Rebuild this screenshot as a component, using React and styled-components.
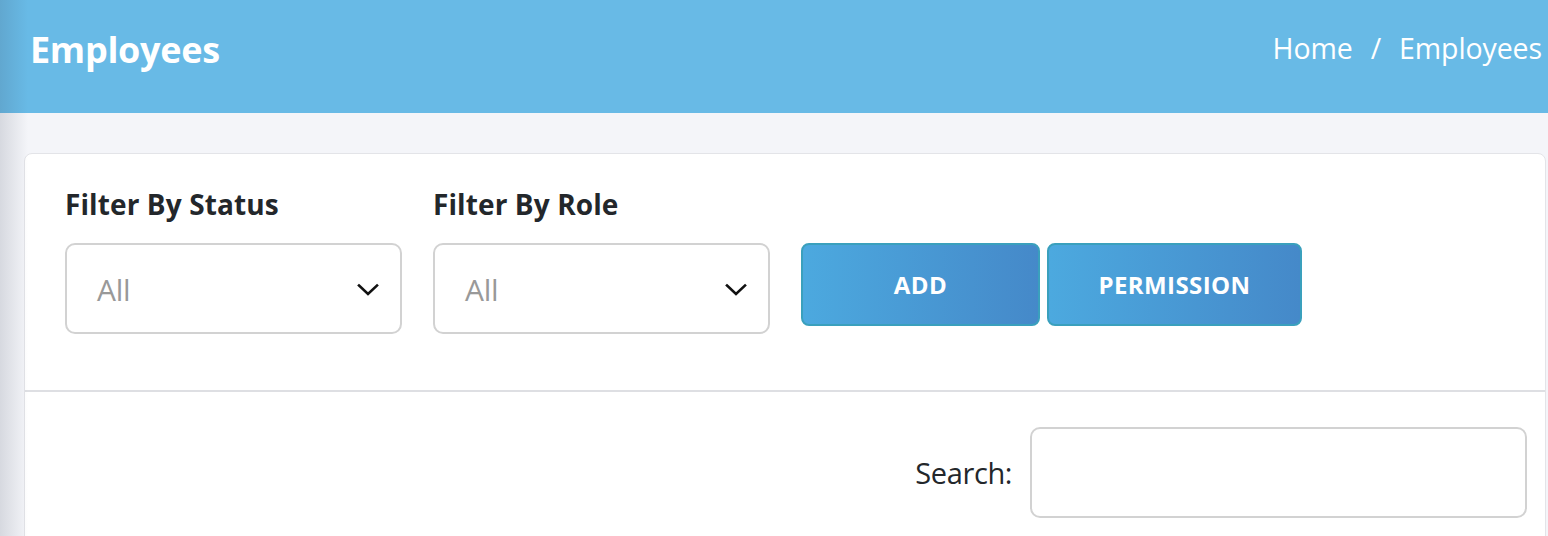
import React from "react";
import styled, { createGlobalStyle } from "styled-components";

const Global = createGlobalStyle`
  html, body { margin: 0; padding: 0; }
  body {
    background: #f4f5f9;
    font-family: "Open Sans", "Noto Sans", sans-serif;
    color: #23272b;
    overflow: hidden;
  }
  * { box-sizing: border-box; }
`;

const Page = styled.div`
  position: relative;
  width: 1548px;
  height: 536px;
  overflow: hidden;
  background: #f4f5f9;
`;

const EdgeShadow = styled.div`
  position: absolute;
  left: 0;
  top: 0;
  bottom: 0;
  width: 28px;
  pointer-events: none;
  background: linear-gradient(to right, rgba(60, 70, 90, 0.16), rgba(60, 70, 90, 0));
`;

const Header = styled.header`
  height: 113px;
  background: #68bae6;
  display: flex;
  align-items: center;
  justify-content: space-between;
  padding: 0 6px 0 30px;
  color: #fff;
`;

const Title = styled.h1`
  margin: 0 0 14px;
  font-size: 36px;
  font-weight: 700;
  letter-spacing: -0.3px;
`;

const Crumbs = styled.nav`
  display: flex;
  align-items: center;
  gap: 18px;
  margin-bottom: 17px;
  font-size: 28.5px;
  letter-spacing: -0.1px;
`;

const Content = styled.main`
  padding: 40px 2px 0 24px;
`;

const Card = styled.section`
  background: #fff;
  border: 1px solid #e3e4e8;
  border-radius: 8px;
  height: 420px;
`;

const FilterBar = styled.div`
  display: flex;
  align-items: flex-start;
  padding: 30px 40px 0;
  height: 238px;
  border-bottom: 2px solid #dedfe3;
`;

const Field = styled.div`
  display: flex;
  flex-direction: column;
  margin-right: 31px;
`;

const Label = styled.label`
  font-size: 28px;
  font-weight: 700;
  letter-spacing: 0.1px;
  height: 59px;
  line-height: 40px;
  color: #23272b;
`;

const SelectBox = styled.div`
  width: 337px;
  height: 91px;
  border: 2px solid #d2d2d2;
  border-radius: 10px;
  display: flex;
  align-items: center;
  justify-content: space-between;
  padding: 2px 20px 0 30px;
  font-size: 30px;
  color: #999;
  letter-spacing: -0.3px;
`;

const Buttons = styled.div`
  display: flex;
  gap: 7px;
  margin-top: 59px;
`;

const Button = styled.button`
  width: ${(p) => p.$w}px;
  height: 83px;
  border: 2px solid #3aa0bd;
  border-radius: 8px;
  background: linear-gradient(to right, #4ca9df, #4589c9);
  color: #fff;
  font-family: inherit;
  font-size: 24px;
  font-weight: 700;
  letter-spacing: 0.4px;
  padding: 0;
`;

const SearchRow = styled.div`
  display: flex;
  justify-content: flex-end;
  align-items: center;
  gap: 18px;
  padding: 35px 18px 0 0;
`;

const SearchLabel = styled.span`
  font-size: 29px;
  letter-spacing: -0.4px;
  color: #23272b;
`;

const SearchInput = styled.div`
  width: 497px;
  height: 91px;
  border: 2px solid #d2d2d2;
  border-radius: 10px;
`;

const Chevron = () => (
  <svg width="24" height="16" viewBox="0 0 24 16" fill="none">
    <path d="M3 3.5 L12 12 L21 3.5" stroke="#111" strokeWidth="2.6" strokeLinecap="square" />
  </svg>
);

export default function App() {
  return (
    <Page>
      <Global />
      <Header>
        <Title>Employees</Title>
        <Crumbs>
          <span>Home</span>
          <span>/</span>
          <span>Employees</span>
        </Crumbs>
      </Header>
      <Content>
        <Card>
          <FilterBar>
            <Field>
              <Label>Filter By Status</Label>
              <SelectBox>
                <span>All</span>
                <Chevron />
              </SelectBox>
            </Field>
            <Field>
              <Label>Filter By Role</Label>
              <SelectBox>
                <span>All</span>
                <Chevron />
              </SelectBox>
            </Field>
            <Buttons>
              <Button $w={239}>ADD</Button>
              <Button $w={255}>PERMISSION</Button>
            </Buttons>
          </FilterBar>
          <SearchRow>
            <SearchLabel>Search:</SearchLabel>
            <SearchInput />
          </SearchRow>
        </Card>
      </Content>
      <EdgeShadow />
    </Page>
  );
}
